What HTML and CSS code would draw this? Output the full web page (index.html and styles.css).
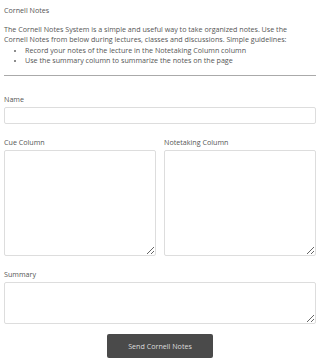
FILE: index.html
```html
<!DOCTYPE html>
<html lang="en">
<head>
  <meta charset="UTF-8">
  <title>Cornell Notes</title>
  <link rel="stylesheet" href="styles.css">
</head>
<body>
  <div class="title">Cornell Notes</div>

  <div class="intro">
    <p>The Cornell Notes System is a simple and useful way to take organized notes. Use the Cornell Notes from below during lectures, classes and discussions. Simple guidelines:</p>
    <ul>
      <li>Record your notes of the lecture in the Notetaking Column column</li>
      <li>Use the summary column to summarize the notes on the page</li>
    </ul>
  </div>

  <form class="notes-form">
    <label class="field">
      <span class="label">Name</span>
      <input type="text" class="input">
    </label>

    <div class="columns">
      <label class="field">
        <span class="label">Cue Column</span>
        <textarea class="input area-tall"></textarea>
      </label>
      <label class="field">
        <span class="label">Notetaking Column</span>
        <textarea class="input area-tall"></textarea>
      </label>
    </div>

    <label class="field">
      <span class="label">Summary</span>
      <textarea class="input area-short"></textarea>
    </label>

    <div class="actions">
      <button type="button" class="send-btn">Send Cornell Notes</button>
    </div>
  </form>
</body>
</html>
```

FILE: styles.css
```css
body {
  margin: 0;
  padding: 5px 4px 4px;
  font-family: "Open Sans", sans-serif;
  font-size: 7.15px;
  line-height: 10px;
  color: #555;
  background: #fff;
}

.title {
  margin-bottom: 9px;
}

.intro p {
  max-width: 296px;
  margin: 0 0 1px 0;
}

.intro ul {
  margin: 0;
  padding-left: 21px;
  padding-bottom: 10px;
  border-bottom: 1px solid #aaa;
}

.intro li::marker {
  font-size: 6px;
  color: #666;
}

.notes-form {
  display: flex;
  flex-direction: column;
  gap: 13px;
  padding-top: 18px;
}

.field {
  display: flex;
  flex-direction: column;
  gap: 3px;
}

.columns {
  display: grid;
  grid-template-columns: 1fr 1fr;
  gap: 8px;
}

.input {
  display: block;
  box-sizing: border-box;
  width: 100%;
  margin: 0;
  border: 1px solid #ddd;
  border-radius: 2px;
  font-family: inherit;
  font-size: 7px;
  background: #fff;
}

input.input {
  height: 17px;
}

.area-tall {
  height: 106px;
}

.area-short {
  height: 42px;
}

.actions {
  display: flex;
  justify-content: center;
  margin-top: -3px;
}

.send-btn {
  width: 106px;
  height: 24px;
  background: #4a4a4a;
  color: #ddd;
  border: none;
  border-radius: 2px;
  font-family: inherit;
  font-size: 7.15px;
}
```
